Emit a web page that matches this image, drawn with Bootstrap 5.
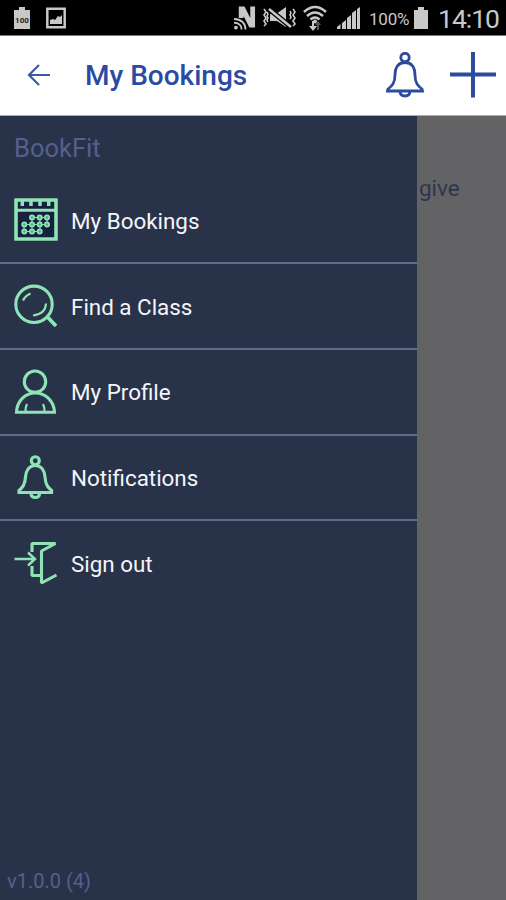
<!DOCTYPE html>
<html lang="en">
<head>
<meta charset="utf-8">
<meta name="viewport" content="width=device-width, initial-scale=1">
<title>BookFit</title>
<link href="https://cdn.jsdelivr.net/npm/bootstrap@5.3.0/dist/css/bootstrap.min.css" rel="stylesheet">
<style>
body{font-family:Roboto,"Liberation Sans",sans-serif;height:900px;overflow:hidden}
svg{display:block;flex:none;fill:none}
.status-bar{height:36px;background:#000;color:#c8c8c8;padding-left:13px;padding-right:7px;border-bottom:1px solid #777}
.battery-pct{font-size:17px;line-height:35px;letter-spacing:-.2px;padding-top:3px;margin-left:8px;margin-right:3px;width:41px;white-space:nowrap}
.clock{font-size:26.5px;line-height:35px;padding-top:2px;margin-left:9px;width:61px;letter-spacing:-1px;white-space:nowrap}
.app-bar{height:80px;background:#fff;color:#2a4ba5;border-bottom:1px solid #aaa;padding:0 10px 0 27px}
.app-title{font-size:28px;font-weight:500;line-height:32px;margin:0 0 0 34px;padding-top:1px}
.drawer{width:417px;background:#28334a}
.brand-name{color:#565f8e;font-size:25.5px;line-height:30px;height:62.5px;padding:17px 0 0 14px}
.menu-row{height:85.7px;padding:2px 0 0 12px;gap:11px;border-bottom:2px solid #5f6d87;color:#f4f5fa;font-size:22.4px;text-decoration:none}
.menu-row span{padding-top:1px}
.menu-row:last-child{border-bottom-color:transparent}
.menu-row svg{stroke:#8ee4b4;stroke-width:3.100}
.version{color:#565f8e;font-size:20px;line-height:24px;padding:0 0 7px 7px}
.dimmed{background:#636365;color:#30354d;font-size:22.4px;line-height:30px;padding:57px 0 0 2px}
</style>
</head>
<body class="d-flex flex-column bg-black">
<div class="status-bar d-flex align-items-center flex-shrink-0">
  <svg width="18" height="24" viewBox="0 0 18 24"><path fill="#c8c8c8" d="M6 1h6v3h5v19H1V4h5z"/><text x="9" y="16.500" text-anchor="middle" font-size="8" font-weight="700" fill="#222">100</text></svg>
  <svg style="margin-left:15px" width="20" height="22" viewBox="0 0 20 22"><path stroke="#c8c8c8" stroke-width="2.500" d="M1.300 1.800h17.400v18.400H1.300z"/><path fill="#c8c8c8" d="M4 17v-4l3-1 2 1 3-4 2 1 2-2v9z"/></svg>
  <svg class="ms-auto" width="22" height="26" viewBox="0 0 23 26"><path fill="#c8c8c8" d="M5 1h6l6 12V1h5v22h-6L10 11v2H5z"/><g stroke="#c8c8c8" stroke-width="2"><path d="M0 14c7 0 12 4 12 11M0 18c5 0 8 3 8 7"/></g><circle cx="2" cy="23" r="2" fill="#c8c8c8"/></svg>
  <svg style="margin-left:6px" width="35" height="24" viewBox="0 0 35 24"><path fill="#c8c8c8" d="M8 8h6l10-7v20l-9-6H8z"/><path stroke="#000" stroke-width="5" d="M7 3l22 18"/><path stroke="#c8c8c8" stroke-width="2.500" d="M7 3l22 18"/><path stroke="#c8c8c8" stroke-width="1.600" d="M2 3l2 3-2 3 2 3-2 3 2 3-2 2M5 6l1 2-1 2 1 2-1 2 1 2M31 3l2 3-2 3 2 3-2 3 2 3-2 2M28 5l1 2-1 2 1 2-1 2"/></svg>
  <svg style="margin-left:6px" width="24" height="26" viewBox="0 0 24 26"><g stroke="#c8c8c8" stroke-width="2.600"><path d="M1 7q11-10 22 0M4 11q8-7 16 0M7.500 14.500q4.500-4 9 0"/></g><circle cx="12" cy="16.500" r="2" fill="#c8c8c8"/><path fill="#c8c8c8" d="M9 16h2v5h3l-4 5-4-5h3z"/><path fill="#555" d="M16 25h-2v-5h-2l3-4 3 4h-2z"/></svg>
  <svg style="margin-left:9px" width="25" height="24" viewBox="0 0 25 24"><path fill="#c8c8c8" d="M1 23v-2l3.500-3v5zM6 23v-6l4-3v9zM11 23V12l4-3v14zM16 23V7l4-3v19zM21 23V3l3-2v22z"/></svg>
  <span class="battery-pct">100%</span>
  <svg width="16" height="24" viewBox="0 0 16 24"><path fill="#c8c8c8" d="M5 1h6v3h4v19H1V4h4z"/></svg>
  <span class="clock">14:10</span>
</div>
<header class="app-bar d-flex align-items-center flex-shrink-0">
  <svg width="24" height="24" viewBox="0 0 24 24" stroke="#3c58a6" stroke-width="2.200"><path d="M23 11H2M12 1L2 11l10 10"/></svg>
  <h1 class="app-title">My Bookings</h1>
  <svg class="ms-auto" width="42" height="48" viewBox="0 0 42 48" stroke="#2c4b9c" stroke-width="2.800"><circle cx="21" cy="5.500" r="4.200"/><path d="M21 10.500C14 10.500 11 16 11 23C11 31 8 34 4 37L3.500 39H38.500L38 37C34 34 31 31 31 23C31 16 28 10.500 21 10.500zM16 39q0 5 5 5t5-5"/></svg>
  <svg style="margin-left:24px" width="46" height="48" viewBox="0 0 46 48" stroke="#2c4b9c" stroke-width="4"><path d="M0 22.500h46M23 0v45.500"/></svg>
</header>
<div class="d-flex flex-grow-1">
  <aside class="drawer d-flex flex-column flex-shrink-0">
    <div class="brand-name">BookFit</div>
    <nav class="d-flex flex-column">
      <a class="menu-row d-flex align-items-center" href="#"><svg width="48" height="48" viewBox="0 0 48 48"><path fill="#17203f" d="M4 3h40v39H4z"/><path d="M4 3h40v39H4zM4 13.300h40"/><path d="M10.300 3v6M19 3v6M28 3v6M36.700 3v6" stroke-width="3.500"/><path stroke-width="1" d="M20 20.500h15M12 27.500h23M12 34.500h16M20 20v14M28 20v14M35 20v7M12 27v7"/><g fill="#4da882" stroke-width="1.800"><circle cx="20" cy="20.500" r="2.100"/><circle cx="27.700" cy="20.500" r="2.100"/><circle cx="35" cy="20.500" r="2.100"/><circle cx="12.300" cy="27.500" r="2.100"/><circle cx="20" cy="27.500" r="2.100"/><circle cx="27.700" cy="27.500" r="2.100"/><circle cx="35" cy="27.500" r="2.100"/><circle cx="12.300" cy="34.500" r="2.100"/><circle cx="20" cy="34.500" r="2.100"/><circle cx="27.700" cy="34.500" r="2.100"/></g></svg><span>My Bookings</span></a>
      <a class="menu-row d-flex align-items-center" href="#"><svg width="48" height="48" viewBox="0 0 48 48"><circle cx="22" cy="21.300" r="18.200"/><path stroke-width="3.800" d="M35 33.500L44 43"/><path stroke-width="2.200" d="M11 17.500q2-4.500 7.500-7M34 20.500q-.5 10.500-13 12"/></svg><span>Find a Class</span></a>
      <a class="menu-row d-flex align-items-center" href="#"><svg width="48" height="48" viewBox="0 0 48 48"><circle cx="23" cy="12.700" r="10.700"/><path d="M4.500 43.200H42.500C42 32 33.500 24 23.300 24S5 32 4.500 43.200z"/><path stroke-width="2.200" d="M15 35q-1.500 3-1.500 7M31 35q1.500 3 1.500 7"/></svg><span>My Profile</span></a>
      <a class="menu-row d-flex align-items-center" href="#"><svg width="48" height="48" viewBox="0 0 48 48"><circle cx="23.300" cy="6.700" r="4"/><path d="M23.300 11.500C17 11.500 14 17 13.500 23C13 31 10.500 33.500 7 36.500V38.500H39.600V36.500C36 33.500 33.600 31 33 23C32.500 17 29.500 11.500 23.300 11.500zM19 39q0 4.500 4.300 4.500t4.300-4.500"/></svg><span>Notifications</span></a>
      <a class="menu-row d-flex align-items-center" href="#"><svg width="48" height="48" viewBox="0 0 48 48"><path stroke-linejoin="bevel" d="M20 12V3.500H43.500L29.500 11V43L44.500 35M20 26V35.500H28"/><path stroke-width="2.400" d="M2.500 19H23M16 12.500L23 19l-7 6.500"/></svg><span>Sign out</span></a>
    </nav>
    <div class="version mt-auto">v1.0.0 (4)</div>
  </aside>
  <main class="dimmed flex-grow-1">give</main>
</div>
<script src="https://cdn.jsdelivr.net/npm/bootstrap@5.3.0/dist/js/bootstrap.bundle.min.js"></script>
</body>
</html>
